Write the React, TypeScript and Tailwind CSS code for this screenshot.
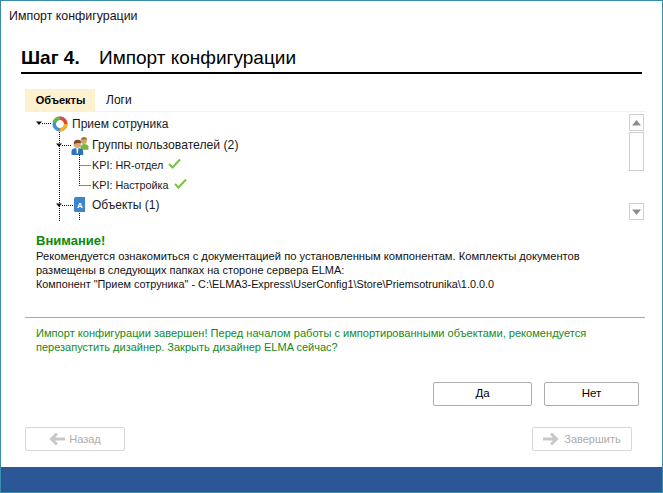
import { ReactNode } from "react";

// --- Tree icons ---

function RingIcon() {
  return (
    <svg width="16" height="16" viewBox="0 0 16 16">
      <circle cx="8" cy="8" r="5.8" fill="none" stroke="#4a90d9" strokeWidth="3.6" />
      <path d="M2.3 6.5A5.8 5.8 0 0 1 8 2.2" fill="none" stroke="#6cb33f" strokeWidth="3.6" />
      <path d="M8 2.2A5.8 5.8 0 0 1 13.7 8" fill="none" stroke="#e2492f" strokeWidth="3.6" />
      <path d="M13.7 8A5.8 5.8 0 0 1 8 13.8" fill="none" stroke="#f4b02e" strokeWidth="3.6" />
    </svg>
  );
}

function UsersIcon() {
  return (
    <svg width="18" height="18" viewBox="0 0 17 17">
      <circle cx="12" cy="3.500" r="3" fill="#d9a06b" />
      <path d="M9.500 3q.5-3 3-3t3 2.500q-3-1-6 .5z" fill="#8a7a3a" />
      <path d="M9 12V8.500Q10 6.500 12.500 6.500t4 2V12z" fill="#7cb342" />
      <circle cx="6" cy="7" r="3.300" fill="#e0a878" />
      <path d="M2.700 7q-.5-4.500 3.500-4.500T9.300 6Q6 5 2.700 7z" fill="#7a4a22" />
      <path d="M.5 17v-4q.5-2.500 5.500-2.500t5.500 2.500v4z" fill="#2f74b8" />
      <path d="M5 10.500h2l-.5 5h-1z" fill="#ffffff" />
    </svg>
  );
}

function BookIcon() {
  return (
    <svg width="11" height="16" viewBox="0 0 11 16">
      <path d="M1.500 0H11v15H1.500Q0 15 0 13.500V1.500Q0 0 1.500 0z" fill="#3f86c8" />
      <text x="6" y="11" fontSize="8" fontWeight="bold" textAnchor="middle" fill="#ffffff">A</text>
    </svg>
  );
}

function Check() {
  return (
    <svg width="13" height="11" viewBox="0 0 13 11">
      <path d="M1 6l3.500 3.500L12 1.500" fill="none" stroke="#7cc04b" strokeWidth="2" />
    </svg>
  );
}

function Arrow({ dir }: { dir: "left" | "right" }) {
  const d = dir === "left" ? "M16 7H3M8 1.500 2.500 7 8 12.500" : "M0 7h13M8 1.500 13.500 7 8 12.500";
  return (
    <svg width="16" height="14" viewBox="0 0 16 14">
      <path d={d} fill="none" stroke="#c8c8c8" strokeWidth="3" />
    </svg>
  );
}

// --- Tree rows ---

function TreeRow({
  left,
  height,
  icon,
  iconWidth,
  gap,
  children
}: {
  left: number;
  height: number;
  icon?: ReactNode;
  iconWidth?: number;
  gap?: number;
  children: ReactNode;
}) {
  return (
    <div className="flex items-center whitespace-nowrap text-[#1a1a1a]" style={{ paddingLeft: left, height }}>
      {icon && (
        <div className="flex justify-center" style={{ width: iconWidth, marginRight: gap }}>
          {icon}
        </div>
      )}
      {children}
    </div>
  );
}

function Connectors() {
  const dot = { stroke: "#111111", strokeDasharray: "1 1", strokeWidth: 1, fill: "none" };
  return (
    <svg className="absolute left-0 top-0" width="120" height="109" viewBox="0 0 120 109">
      <path d="M17 11.500H27" {...dot} />
      <path d="M34.500 18V109" {...dot} />
      <path d="M37 33.500H47" {...dot} />
      <path d="M37 93.500H49" {...dot} />
      <path d="M54.500 41V73.500M54.500 53.500H66M54.500 73.500H66" {...dot} />
      <path d="M54.500 101V109" {...dot} />
      {/* expander triangles */}
      <path d="M11 9.500h6l-3 3.500zM31 31.500h6l-3 3.500zM31 91.500h6l-3 3.500z" fill="#111111" />
    </svg>
  );
}

function ScrollButton({ up }: { up: boolean }) {
  return (
    <div className="flex h-[17px] w-[15px] items-center justify-center border border-[#d0d0d0] bg-white">
      <svg width="9" height="6" viewBox="0 0 9 6">
        <path d={up ? "M4.500 0 9 5.500H0z" : "M0 .5h9L4.500 6z"} fill="#8c8c8c" />
      </svg>
    </div>
  );
}

function DialogButton({ label, width }: { label: string; width: string }) {
  return (
    <div className={`flex h-[24px] items-center justify-center rounded-[2px] border border-[#adadad] bg-white text-[11.500px] text-black ${width}`}>
      {label}
    </div>
  );
}

export default function App() {
  return (
    <div className="flex h-[493px] w-[663px] flex-col overflow-hidden border border-[#3a8cab] bg-white font-['Liberation_Sans',sans-serif]">
      {/* Title bar */}
      <div className="h-[29px] pl-[8px] pt-[8px] text-[12.400px] leading-[14px] text-[#1a1020]">Импорт конфигурации</div>

      {/* Heading */}
      <div className="mx-[20px] mt-[15px] flex h-[29px] items-center border-b-[2px] border-black pb-[3px] text-[19px] leading-[21px] text-black">
        <span className="w-[78px] font-bold">Шаг 4.</span>
        <span>Импорт конфигурации</span>
      </div>

      {/* Tabs */}
      <div className="ml-[24px] mr-[16px] mt-[15px] flex h-[23px] border-b border-[#eef2fa] text-[12px]">
        <div className="flex h-[22px] w-[70px] items-center justify-center bg-[#fdf1d0] pl-[1px] text-[11px] font-bold text-black">Объекты</div>
        <div className="flex h-[22px] items-center pl-[11px] text-[#111111]">Логи</div>
      </div>

      {/* Tree with scroll bar */}
      <div className="relative ml-[24px] mr-[18px] flex h-[109px] overflow-hidden text-[12px]">
        <Connectors />
        <div className="relative flex-1">
          <TreeRow left={26} height={23} icon={<RingIcon />} iconWidth={17} gap={4}>
            <span>Прием сотруника</span>
          </TreeRow>
          <TreeRow left={46} height={21} icon={<UsersIcon />} iconWidth={18} gap={3}>
            <span className="text-[12.200px]">Группы пользователей (2)</span>
          </TreeRow>
          <TreeRow left={67} height={19}>
            <span className="text-[10.800px]">KPI: HR-отдел</span>
            <span className="ml-[5px] -mt-[4px] flex"><Check /></span>
          </TreeRow>
          <TreeRow left={67} height={20}>
            <span className="text-[10.800px]">KPI: Настройка</span>
            <span className="ml-[5px] -mt-[4px] flex"><Check /></span>
          </TreeRow>
          <TreeRow left={46} height={20} icon={<BookIcon />} iconWidth={16} gap={5}>
            <span>Объекты (1)</span>
          </TreeRow>
        </div>
        <div className="flex w-[15px] flex-col pt-[2px]">
          <ScrollButton up />
          <div className="mt-[1px] h-[39px] w-[15px] border border-[#d0d0d0]" />
          <div className="mt-[32px]">
            <ScrollButton up={false} />
          </div>
        </div>
      </div>

      {/* Notice */}
      <div className="ml-[35px] mt-[11px] h-[85px] text-[11px] leading-[14px] text-[#111111]">
        <div className="text-[13px] font-bold leading-[17px] text-[#0a8a0a]">Внимание!</div>
        <div className="text-[11.200px]">Рекомендуется ознакомиться с документацией по установленным компонентам. Комплекты документов</div>
        <div>размещены в следующих папках на стороне сервера ELMA:</div>
        <div className="text-[10.850px]">Компонент "Прием сотруника" - C:\ELMA3-Express\UserConfig1\Store\Priemsotrunika\1.0.0.0</div>
      </div>

      <div className="ml-[24px] mr-[17px] h-px bg-[#a9a9a9]" />

      <div className="ml-[35px] mt-[8px] h-[56px] text-[11px] leading-[14px] text-[#15891a]">
        <div className="text-[11.080px]">Импорт конфигурации завершен! Перед началом работы с импортированными объектами, рекомендуется</div>
        <div>перезапустить дизайнер. Закрыть дизайнер ELMA сейчас?</div>
      </div>

      {/* Answer buttons */}
      <div className="ml-[432px] flex gap-[12px]">
        <DialogButton label="Да" width="w-[99px]" />
        <DialogButton label="Нет" width="w-[95px]" />
      </div>

      {/* Wizard navigation */}
      <div className="ml-[24px] mr-[30px] mt-[21px] flex justify-between">
        <div className="flex h-[24px] w-[100px] items-center justify-center gap-[4px] rounded-[2px] border border-[#d8d8d8] text-[11px] text-[#adadad]">
          <Arrow dir="left" />
          <span>Назад</span>
        </div>
        <div className="flex h-[24px] w-[100px] items-center justify-center gap-[5px] rounded-[2px] border border-[#d8d8d8] text-[11px] text-[#adadad]">
          <Arrow dir="right" />
          <span>Завершить</span>
        </div>
      </div>

      {/* Footer */}
      <div className="mt-auto h-[25px] bg-[#2b5797]" />
    </div>
  );
}
